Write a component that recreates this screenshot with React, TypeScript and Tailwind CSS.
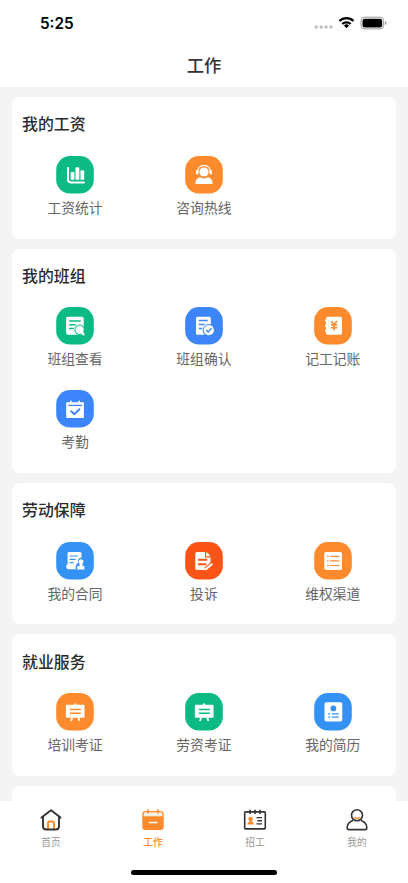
import type { ReactNode } from "react";

type IconName =
  | "chart" | "agent" | "docSearch" | "docCheck" | "ledger" | "calendar"
  | "contract" | "complaint" | "list" | "board" | "resume";

type Item = { label: string; icon: IconName; color: string };

const GREEN = "#0cbb84";
const ORANGE = "#fd8a2c";
const BLUE = "#3d85fb";
const SKY = "#3492f5";
const RED = "#fc5416";

const sections: { title: string; items: Item[] }[] = [
  {
    title: "我的工资",
    items: [
      { label: "工资统计", icon: "chart", color: GREEN },
      { label: "咨询热线", icon: "agent", color: ORANGE },
    ],
  },
  {
    title: "我的班组",
    items: [
      { label: "班组查看", icon: "docSearch", color: GREEN },
      { label: "班组确认", icon: "docCheck", color: BLUE },
      { label: "记工记账", icon: "ledger", color: ORANGE },
      { label: "考勤", icon: "calendar", color: BLUE },
    ],
  },
  {
    title: "劳动保障",
    items: [
      { label: "我的合同", icon: "contract", color: SKY },
      { label: "投诉", icon: "complaint", color: RED },
      { label: "维权渠道", icon: "list", color: ORANGE },
    ],
  },
  {
    title: "就业服务",
    items: [
      { label: "培训考证", icon: "board", color: ORANGE },
      { label: "劳资考证", icon: "board", color: GREEN },
      { label: "我的简历", icon: "resume", color: SKY },
    ],
  },
];

function glyph(name: IconName, c: string): ReactNode {
  switch (name) {
    case "chart":
      return (
        <>
          <path d="M12 12V23.600Q12 26.400 14.800 26.400H28" fill="none" stroke="#fff" strokeWidth="2" strokeLinecap="round" />
          <rect x="14.700" y="16" width="3.700" height="7.800" rx=".9" />
          <rect x="19.500" y="11.200" width="3.800" height="12.600" rx=".9" />
          <rect x="24.500" y="14.300" width="3.700" height="9.500" rx=".9" />
        </>
      );
    case "agent":
      return (
        <>
          <path d="M12.600 16.200v-.7a6.400 6.200 0 0 1 12.800 0v.7" fill="none" stroke="#fff" strokeWidth="1.300" />
          <rect x="11" y="14" width="2.500" height="4.500" rx="1.200" />
          <rect x="24.500" y="14" width="2.500" height="4.500" rx="1.200" />
          <circle cx="19" cy="16" r="4.600" />
          <path d="M10.300 28c0-3.800 1.600-6.100 4.700-6.700q4 2.200 8 0c3.100.6 4.700 2.900 4.700 6.700z" />
        </>
      );
    case "docSearch":
      return (
        <>
          <rect x="10.100" y="9.700" width="17.600" height="18.100" rx="1.800" />
          <path d="M13.200 13.900h11.500M13.200 17.700h6.500M13.200 21.500h4.600" stroke={c} strokeWidth="1.500" fill="none" />
          <circle cx="23.600" cy="22.700" r="5.200" fill={c} />
          <circle cx="23.600" cy="22.700" r="4.200" />
          <path d="m25.600 25 1.900 2.300" stroke="#fff" strokeWidth="2.400" strokeLinecap="round" />
        </>
      );
    case "docCheck":
      return (
        <>
          <rect x="11" y="9.700" width="14.800" height="18" rx="1.500" />
          <path d="M13.800 13.600h9M13.800 17.500h5.700M13.800 21.500h3.300" stroke={c} strokeWidth="1.500" fill="none" />
          <circle cx="23.800" cy="23.200" r="6.100" fill={c} />
          <circle cx="23.800" cy="23.200" r="5.100" />
          <path d="m21.200 23.100 2 2 3.400-3.800" fill="none" stroke={c} strokeWidth="1.400" />
        </>
      );
    case "ledger":
      return (
        <>
          <rect x="12" y="9.800" width="16" height="18" rx="1.700" />
          <path d="M11 13.500h2.200M11 18.800h2.200M11 24h2.200" stroke="#fff" strokeWidth="2.200" />
          <path d="m17.200 14.200 2.900 3.500 2.900-3.500M20.100 17.500v6M16.900 18h6.400M16.900 20.700h6.400" fill="none" stroke={c} strokeWidth="1.600" />
        </>
      );
    case "calendar":
      return (
        <>
          <rect x="10.200" y="12.300" width="17.700" height="15.700" rx="1" />
          <path d="M14.900 11.300v2M23.200 11.300v2" stroke="#fff" strokeWidth="1.700" strokeLinecap="round" />
          <path d="M12.200 15.400h13.900" stroke={c} strokeWidth="1.300" />
          <path d="m14.700 20.700 3.600 3.500 5.700-5.400" fill="none" stroke={c} strokeWidth="2" />
        </>
      );
    case "contract":
      return (
        <>
          <path d="M12.700 9.900H24a1.500 1.500 0 0 1 1.500 1.500v4.200c-2.600.2-4 2.600-3.100 4.900-.7 1.300-2.700 1.700-2.700 4v2.700h-7.200q-2.200 0-2.200-2.200v-2.200h1.300V11q0-1.100 1.100-1.100z" />
          <path d="M13.600 14h8.300M13.600 17.300h6M13.600 20.600h4" stroke={c} strokeWidth="1.200" />
          <path d="M25 17.200a2.400 2.400 0 0 1 1.500 4.300v2.500h1.900v3.600h-7.200V24h2.300v-2.500A2.400 2.400 0 0 1 25 17.200z" />
        </>
      );
    case "complaint":
      return (
        <>
          <path d="M12 10h8.700l4.800 4.900v6.200l-6.400 6.800H12a1.700 1.700 0 0 1-1.700-1.700V11.700A1.700 1.700 0 0 1 12 10z" />
          <path d="M20.500 10v4.900h5" fill="none" stroke={c} strokeWidth="1.100" />
          <path d="M21.900 10.200 25.300 13.600h-3.400z" />
          <path d="M13.100 17.800h9.200M13.100 22.300h8.200" stroke={c} strokeWidth="1.900" />
          <path d="m20.500 27.200 6.800-5.600" stroke={c} strokeWidth="3.900" />
          <path d="m20.600 27.400 6.200-5.100" stroke="#fff" strokeWidth="2.100" strokeLinecap="round" />
        </>
      );
    case "list":
      return (
        <>
          <rect x="10.300" y="10" width="17.700" height="17.900" rx="1.700" />
          <path d="M13 14.300h1.700M13 18.900h1.700M13 23.500h1.700M16.200 14.300h9M16.200 18.900h9M16.200 23.500h9" stroke={c} strokeWidth="1.200" />
        </>
      );
    case "board":
      return (
        <>
          <rect x="9.900" y="11.800" width="18.600" height="13" rx=".8" />
          <path d="M19.200 11.400v1.200" stroke="#fff" strokeWidth="2.200" strokeLinecap="round" />
          <path d="m16.300 24.500-1.400 3.500M22.100 24.500l1.400 3.500" stroke="#fff" strokeWidth="1.900" />
          <path d="M14.100 16.600h10.700M14.100 20.200h10.700" stroke={c} strokeWidth="1.500" />
        </>
      );
    case "resume":
      return (
        <>
          <rect x="10.500" y="9.300" width="17.800" height="19.200" rx="1.700" />
          <circle cx="19.400" cy="15.400" r="2.900" fill={c} />
          <path d="M14.300 20.900h2M17.800 20.900h7M14.300 24.200h2M17.800 24.200h7" stroke={c} strokeWidth="1.200" />
        </>
      );
  }
}

function StatusBar() {
  return (
    <div className="flex h-[44px] items-center justify-between pl-[40px] pr-[21px] pt-[2px]">
      <span className="pt-px font-['Inter'] text-[15.300px] font-semibold leading-none text-black">5:25</span>
      <svg width="74" height="16" viewBox="313 14.300 74 16">
        <g fill="#bdbdbd">
          <circle cx="316.300" cy="26.300" r="1.700" />
          <circle cx="321.200" cy="26.300" r="1.700" />
          <circle cx="326" cy="26.300" r="1.700" />
          <circle cx="330.900" cy="26.300" r="1.700" />
        </g>
        <g fill="none" stroke="#000" strokeWidth="2.200">
          <path d="M339.500 20.300a9.900 9.900 0 0 1 14 0" />
          <path d="M342.300 23.300a6 6 0 0 1 8.400 0" />
        </g>
        <path d="M346.500 27.500 343.900 24.900a3.700 3.700 0 0 1 5.200 0z" />
        <rect x="361" y="16.500" width="22.700" height="11.700" rx="3.500" fill="none" stroke="#999" strokeWidth="1" />
        <rect x="362.500" y="18" width="19.700" height="8.700" rx="2.200" />
        <path d="M385 20.300q1.500.8 1.500 2t-1.500 2z" fill="#999" />
      </svg>
    </div>
  );
}

function Card({ title, items }: { title: string; items: Item[] }) {
  return (
    <section className="shrink-0 rounded-[8px] bg-white pb-[20.800px] pt-[15.400px]">
      <h2 className="mb-[19.400px] pl-[10px] text-[15.900px] font-medium leading-[24px] text-[#2b2b2b]">{title}</h2>
      <div className="-ml-[1.400px] -mr-[1.200px] grid grid-cols-3 gap-y-[20.600px]">
        {items.map((item) => (
          <div key={item.label} className="flex h-[62px] flex-col items-center">
            <svg width="38" height="38" viewBox="0 0 38 38" fill="#fff">
              <rect x=".2" y=".1" width="37.600" height="37.500" rx="13.800" fill={item.color} />
              {glyph(item.icon, item.color)}
            </svg>
            <span className="mt-[3px] text-[13.800px] leading-[20px] text-[#666]">{item.label}</span>
          </div>
        ))}
      </div>
    </section>
  );
}

const tabs: { label: string; active?: boolean; icon: ReactNode }[] = [
  {
    label: "首页",
    icon: (
      <g strokeWidth="1.900" strokeLinecap="round" strokeLinejoin="round">
        <path d="M9 21v-5.500q0-2 1.700-2h2.600q1.700 0 1.700 2V21" stroke={ORANGE} strokeLinecap="butt" />
        <path d="M2.500 9.600 12 2.300l9.500 7.300M4 9v9.200q0 3.300 3.300 3.300h9.400q3.300 0 3.300-3.300V9" stroke="#333" />
      </g>
    ),
  },
  {
    label: "工作",
    active: true,
    icon: (
      <>
        <path d="M1.300 9h21.400v9.700q0 3.300-3 3.300H4.300q-3 0-3-3.300z" fill={ORANGE} />
        <path d="M2 8.800V5.900q0-2.300 2.300-2.300h15.400Q22 3.600 22 5.900v2.900z" fill="#fff1e6" stroke={ORANGE} strokeWidth="1.300" />
        <path d="M7 1.300v4.300M17 1.300v4.300" stroke={ORANGE} strokeWidth="1.600" />
        <path d="M8.500 14.400h7.300" stroke="#fff" strokeWidth="1.500" strokeLinecap="round" />
      </>
    ),
  },
  {
    label: "招工",
    icon: (
      <>
        <rect x="1.700" y="3.900" width="20.600" height="17" rx=".8" stroke="#333" strokeWidth="1.600" />
        <path d="M7 1.700v4.300M12 1.700v4.300M17 1.700v4.300" stroke="#333" strokeWidth="1.600" />
        <circle cx="7.600" cy="11" r="2.200" fill={ORANGE} />
        <path d="M6.500 12h2.200v1.500q2.200.5 2.200 2.900H4.300q0-2.400 2.200-2.900z" fill={ORANGE} />
        <path d="M13.500 9.600H19M14.500 12.700H19M13.500 15.900H19" stroke="#333" strokeWidth="1.400" />
      </>
    ),
  },
  {
    label: "我的",
    icon: (
      <>
        <circle cx="12" cy="7.200" r="5.500" stroke="#333" strokeWidth="1.600" />
        <path d="M8.200 12.300C4.300 13.800 2.200 16.600 2.200 19.700q0 1.900 1.700 1.900h16.200q1.700 0 1.700-1.900c0-3.100-2.100-5.900-6-7.400" stroke="#333" strokeWidth="1.600" />
        <path d="M9.600 9.500q2.400 2 4.800 0" stroke={ORANGE} strokeWidth="1.400" strokeLinecap="round" />
      </>
    ),
  },
];

export default function App() {
  return (
    <div className="flex h-[883px] w-[408px] flex-col overflow-hidden bg-[#f4f4f4] font-['Noto_Sans_CJK_SC',sans-serif]">
      <header className="h-[87px] shrink-0 bg-white">
        <StatusBar />
        <h1 className="text-center text-[17.300px] font-medium leading-[42px] text-[#333]">工作</h1>
      </header>
      <main className="flex min-h-0 flex-1 flex-col gap-[10px] overflow-hidden px-[12px] pt-[10px]">
        {sections.map((s) => (
          <Card key={s.title} {...s} />
        ))}
        <section className="h-[141px] shrink-0 rounded-[8px] bg-white" />
      </main>
      <footer className="flex h-[82px] shrink-0 flex-col items-center bg-white">
        <nav className="grid w-full grid-cols-4">
          {tabs.map((t) => (
            <div key={t.label} className="flex flex-col items-center pt-[7px]">
              <svg width="24" height="24" viewBox="0 0 24 24" fill="none">{t.icon}</svg>
              <span className={t.active ? "mt-[3px] text-[9.700px] font-medium leading-[14px] text-[#fd8a2c]" : "mt-[3px] text-[9.700px] leading-[14px] text-[#999]"}>
                {t.label}
              </span>
            </div>
          ))}
        </nav>
        <div className="mt-[21px] h-[5px] w-[146px] rounded-full bg-black" />
      </footer>
    </div>
  );
}
